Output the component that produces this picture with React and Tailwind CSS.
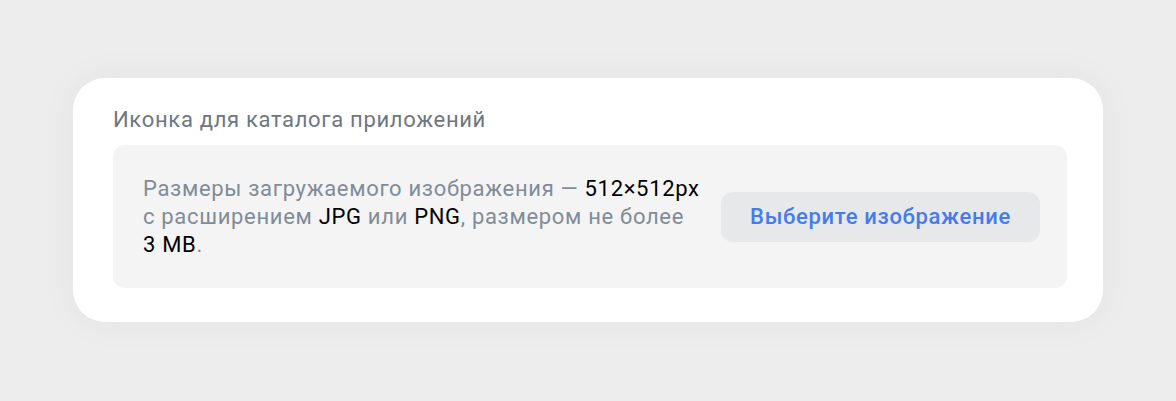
export default function App() {
  return (
    <div
      className="w-[1176px] h-[401px] bg-[#ededed] overflow-hidden"
      style={{ fontFamily: 'Roboto, "Noto Sans", sans-serif' }}
    >
      <div className="pt-[78px] pl-[73px]">
        <div className="w-[1030px] h-[244px] bg-white rounded-[32px] shadow-[0_0_40px_rgba(0,0,0,0.045)] pl-[40px] pr-[36px] pt-[30px]">
          <div className="text-[22px] leading-[24px] tracking-[0.68px] text-[#6d7784]">
            Иконка для каталога приложений
          </div>
          <div className="mt-[13px] h-[143px] bg-[#f4f4f5] rounded-[12px] pl-[30px] pr-[27px] flex items-center justify-between">
            <div className="text-[22px] leading-[28px] tracking-[0.68px] text-[#818c99] whitespace-nowrap">
              Размеры загружаемого изображения — <span className="text-black">512×512px</span>
              <br />
              с расширением <span className="text-black">JPG</span> или <span className="text-black">PNG</span>, размером не более
              <br />
              <span className="text-black">3 MB</span>.
            </div>
            <button className="h-[50px] w-[319px] rounded-[12px] bg-[#e7e8ea] text-[#447bef] text-[22px] tracking-[0.68px] font-medium flex items-center justify-center">
              Выберите изображение
            </button>
          </div>
        </div>
      </div>
    </div>
  );
}
